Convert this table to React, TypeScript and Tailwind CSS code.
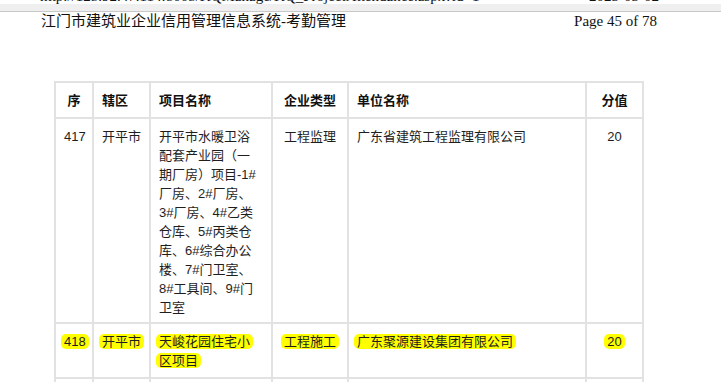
const SANS = "font-['Liberation_Sans','Noto_Sans_CJK_SC',sans-serif]";
const SERIF = "font-['Liberation_Serif','Noto_Sans_CJK_SC',serif]";

function Mark({ children }: { children: React.ReactNode }) {
  return (
    <span className="-mx-[3px] rounded-[5px] bg-[#ffff00] px-[3px] box-decoration-clone">
      {children}
    </span>
  );
}

const th = "border-2 border-[#e2e2e2] px-[8px] align-middle font-bold text-[#111]";
const td = "border-2 border-[#e2e2e2] px-[8px] pt-[8px] align-top";

export default function App() {
  return (
    <div className="w-[721px] overflow-hidden bg-white">
      <div className={`flex h-[4px] justify-between overflow-hidden pl-[40px] pr-[62px] text-[15px] leading-[16px] text-[#111] ${SERIF}`}>
        <span className="-mt-[12px]">http://125.92.47.114:8005/KQManage/KQ_ProjectAttendance.aspx?id=1</span>
        <span className="-mt-[12px]">2023-03-02</span>
      </div>
      <div className="h-[8px] border-b border-[#c8c8c8] bg-[#efefef]" />

      <div className={`flex justify-between pl-[41px] pr-[64px] pt-[1px] text-[15px] leading-[16px] text-[#111] ${SERIF}`}>
        <span>江门市建筑业企业信用管理信息系统-考勤管理</span>
        <span>Page 45 of 78</span>
      </div>

      <table className={`ml-[54px] mt-[52px] w-[590px] table-fixed border-collapse text-[13px] leading-[19px] text-[#1e1e1e] ${SANS}`}>
        <colgroup>
          <col className="w-[38px]" />
          <col className="w-[57px]" />
          <col className="w-[122px]" />
          <col className="w-[76px]" />
          <col className="w-[238px]" />
          <col className="w-[57px]" />
        </colgroup>
        <thead>
          <tr className="h-[36px]">
            <th className={`${th} px-0 text-center`}>序</th>
            <th className={`${th} text-left`}>辖区</th>
            <th className={`${th} text-left`}>项目名称</th>
            <th className={`${th} px-0 text-center`}>企业类型</th>
            <th className={`${th} px-[6px] text-left`}>单位名称</th>
            <th className={`${th} px-0 text-center`}>分值</th>
          </tr>
        </thead>
        <tbody>
          <tr className="h-[205px]">
            <td className={`${td} px-0 text-center`}>417</td>
            <td className={td}>开平市</td>
            <td className={`${td} pr-[14px]`}>
              开平市水暖卫浴配套产业园（一期厂房）项目-1#厂房、2#厂房、3#厂房、4#乙类仓库、5#丙类仓库、6#综合办公楼、7#门卫室、8#工具间、9#门卫室
            </td>
            <td className={`${td} px-0 text-center`}>工程监理</td>
            <td className={`${td} px-[6px]`}>广东省建筑工程监理有限公司</td>
            <td className={`${td} px-0 text-center`}>20</td>
          </tr>
          <tr className="h-[55px]">
            <td className={`${td} px-0 text-center`}>
              <Mark>418</Mark>
            </td>
            <td className={td}>
              <Mark>开平市</Mark>
            </td>
            <td className={`${td} pr-[14px]`}>
              <Mark>天峻花园住宅小区项目</Mark>
            </td>
            <td className={`${td} px-0 text-center`}>
              <Mark>工程施工</Mark>
            </td>
            <td className={`${td} px-[6px]`}>
              <Mark>广东聚源建设集团有限公司</Mark>
            </td>
            <td className={`${td} px-0 text-center`}>
              <Mark>20</Mark>
            </td>
          </tr>
          <tr className="h-[40px]">
            <td className={td} />
            <td className={td} />
            <td className={td} />
            <td className={td} />
            <td className={td} />
            <td className={td} />
          </tr>
        </tbody>
      </table>
    </div>
  );
}
